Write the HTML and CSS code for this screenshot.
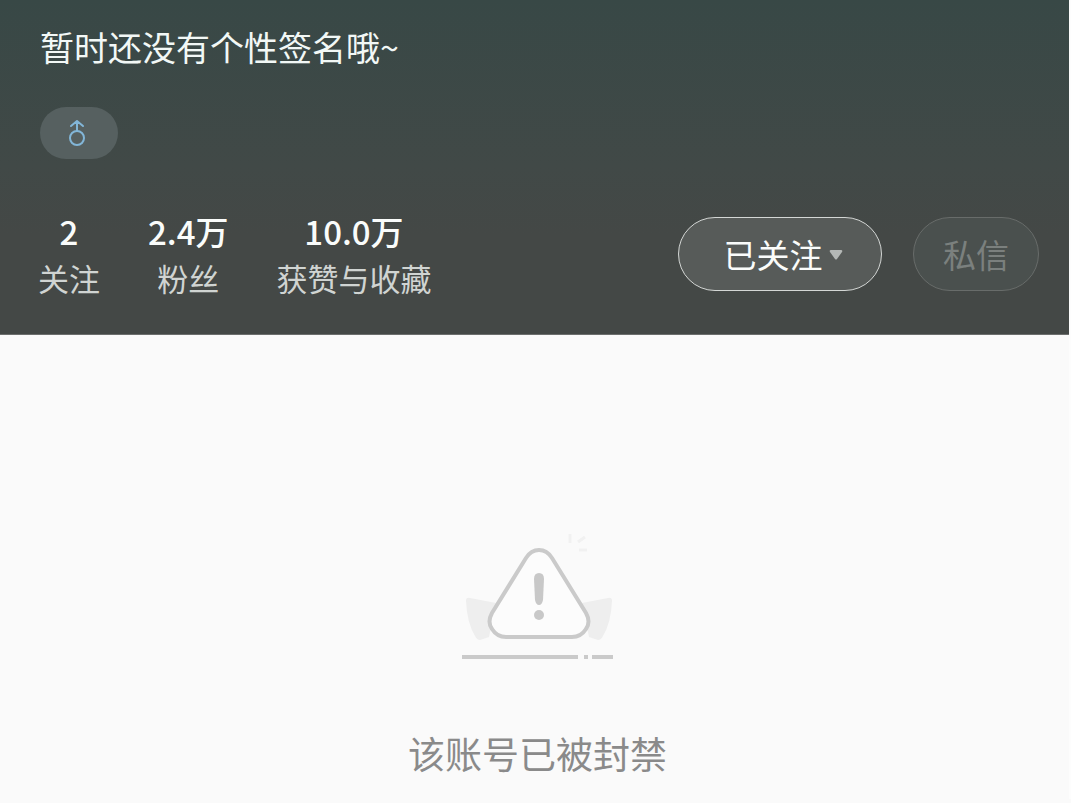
FILE: index.html
```html
<!DOCTYPE html>
<html lang="zh-CN">

<head>
    <meta charset="UTF-8">
    <meta name="viewport" content="width=device-width, initial-scale=1.0">
    <title>个人主页</title>
    <link rel="stylesheet" href="styles.css">
</head>

<body>

    <header class="profile">
        <p class="bio">暂时还没有个性签名哦~</p>

        <span class="gender">
            <svg width="20" height="28" viewBox="0 0 20 28" role="img" aria-label="男">
                <circle cx="10" cy="19" r="7" />
                <path d="M10 12V2M4 7l6-5 6 5" />
            </svg>
        </span>

        <div class="profile-row">
            <ul class="stats">
                <li><strong>2</strong><span>关注</span></li>
                <li><strong>2.4万</strong><span>粉丝</span></li>
                <li><strong>10.0万</strong><span>获赞与收藏</span></li>
            </ul>

            <div class="actions">
                <button type="button" class="btn btn-follow">已关注
                    <svg width="14" height="12" viewBox="0 0 14 12" aria-hidden="true">
                        <path d="M2 2h10q2 0 1 2L8 11q-1 1-2 0L1 4q-1-2 1-2z" />
                    </svg>
                </button>
                <button type="button" class="btn btn-message" disabled>私信</button>
            </div>
        </div>
    </header>

    <!-- banned account -->
    <main class="empty">
        <svg class="empty-icon" width="156" height="132" viewBox="0 0 156 132" aria-hidden="true">
            <path class="wing" d="M5 70q0-4 4-3l26 5-7 34-9 3q-3 0-5-4Q6 92 5 70zM151 70q0-4-4-3l-26 5 7 34 9 3q3 0 5-4 8-13 9-35z" />
            <path class="spark" d="M109 3v9M117 11l7-5M118 19h8" />
            <path class="sign" d="M65 27q5-8 13-8t13 8l34 55q5 9 0 16-5 8-14 8H45q-9 0-14-8-5-7 0-16z" />
            <path class="mark" d="M73 48q0-6 5-6t5 6l-1 21q-1 5-4 5t-4-5z" />
            <circle class="mark" cx="78" cy="84" r="5" />
            <path class="ground" d="M1 126h116M123 126h4M131 126h21" />
        </svg>
        <p>该账号已被封禁</p>
    </main>

</body>

</html>
```
FILE: styles.css
```css
* {
    box-sizing: border-box;
}

body {
    margin: 0;
    font-family: "Noto Sans CJK SC", sans-serif;
    background-color: #fafafa;
    border-right: 2px solid #fdfdfd;
}

p,
ul {
    margin: 0;
    padding: 0;
}

.profile {
    padding: 23px 30px 33px 38px;
    background: linear-gradient(#384846, #414947 50%, #444846 70%);
    border-bottom: 1px solid #6c6e6d;
}

.bio {
    padding-left: 2px;
    font-size: 34px;
    line-height: 48px;
    color: #f2f8f6;
}

.gender {
    display: flex;
    justify-content: center;
    align-items: center;
    width: 78px;
    height: 52px;
    margin-top: 36px;
    margin-left: 2px;
    padding-right: 4px;
    border-radius: 26px;
    background-color: #566060;
}

.gender svg {
    fill: none;
    stroke: #82b6d8;
    stroke-width: 2;
    stroke-linecap: round;
    stroke-linejoin: round;
}

.profile-row {
    display: flex;
    justify-content: space-between;
    align-items: center;
    margin-top: 48px;
}

.stats {
    display: flex;
    gap: 48px;
    list-style: none;
}

.stats li {
    display: flex;
    flex-direction: column;
    align-items: center;
}

.stats strong {
    font-size: 33px;
    font-weight: 500;
    line-height: 48px;
    color: #fafcfb;
}

.stats span {
    font-size: 31px;
    line-height: 46px;
    color: #d0d4d2;
}

.actions {
    display: flex;
    gap: 31px;
}

.btn {
    display: flex;
    justify-content: center;
    align-items: center;
    gap: 6px;
    height: 74px;
    border-radius: 37px;
    font-family: inherit;
    font-size: 33px;
    line-height: 48px;
}

.btn-follow {
    width: 204px;
    padding-left: 12px;
    border: 1px solid #d4d7d5;
    background-color: #575b59;
    color: #fafcfb;
}

.btn-follow svg {
    fill: #b4b8b6;
}

.btn-message {
    width: 126px;
    border: 1px solid #686c6a;
    background-color: #4a504e;
    color: #7b807e;
}

.empty {
    display: flex;
    flex-direction: column;
    align-items: center;
    padding: 196px 0 20px;
}

.empty p {
    margin-top: 64px;
    padding-left: 6px;
    font-size: 37px;
    line-height: 52px;
    color: #8a8a8a;
}

.empty-icon {
    margin-left: 8px;
    fill: none;
}

.wing {
    fill: #eeeeee;
}

.spark {
    stroke: #f1f1f1;
    stroke-width: 3;
}

.sign {
    fill: #fcfcfc;
    stroke: #cacaca;
    stroke-width: 4;
}

.mark {
    fill: #c8c8c8;
}

.ground {
    stroke: #cacaca;
    stroke-width: 4;
}
```
